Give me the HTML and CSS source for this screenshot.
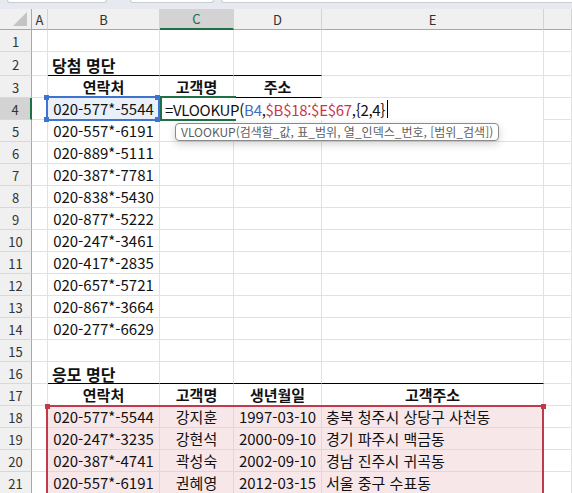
FILE: index.html
```html
<!DOCTYPE html>
<html lang="ko">
<head>
    <meta charset="UTF-8">
    <title>당첨 명단 - VLOOKUP</title>
    <link rel="stylesheet" href="styles.css">
</head>
<body>
    <div class="topbar">
        <div class="tb-box name-box"></div>
        <div class="tb-box fx-box"></div>
        <div class="tb-box bar-box"></div>
    </div>

    <div class="sheet">
        <div class="row colhead">
            <div class="corner">
                <svg width="14" height="14" viewBox="0 0 14 14"><polygon points="14,0 14,14 0,14" fill="#c4c4c4"/></svg>
            </div>
            <div class="ch">A</div>
            <div class="ch">B</div>
            <div class="ch active">C</div>
            <div class="ch">D</div>
            <div class="ch">E</div>
            <div class="ch"></div>
        </div>

        <div class="row">
            <div class="rh">1</div>
            <div class="c"></div><div class="c"></div><div class="c"></div><div class="c"></div><div class="c"></div><div class="c"></div>
        </div>

        <div class="row tall">
            <div class="rh">2</div>
            <div class="c"></div>
            <div class="c title line-b">당첨 명단</div>
            <div class="c line-b"></div>
            <div class="c line-b"></div>
            <div class="c"></div><div class="c"></div>
        </div>

        <div class="row">
            <div class="rh">3</div>
            <div class="c"></div>
            <div class="c th line-b">연락처</div>
            <div class="c th line-b">고객명</div>
            <div class="c th line-b">주소</div>
            <div class="c"></div><div class="c"></div>
        </div>

        <div class="row">
            <div class="rh active">4</div>
            <div class="c"></div>
            <div class="c ctr ref-cell">020-577*-5544</div>
            <div class="c edit span3">
                <span>=VLOOKUP(</span><span class="ref-blue">B4</span><span>,</span><span class="ref-red">$B$18:$E$67</span><span>,{2,4}</span><span class="caret"></span>
                <div class="tooltip">VLOOKUP(검색할_값, 표_범위, 열_인덱스_번호, [범위_검색])</div>
            </div>
            <div class="c"></div>
        </div>

        <div class="row"><div class="rh">5</div><div class="c"></div><div class="c ctr">020-557*-6191</div><div class="c"></div><div class="c"></div><div class="c"></div><div class="c"></div></div>
        <div class="row"><div class="rh">6</div><div class="c"></div><div class="c ctr">020-889*-5111</div><div class="c"></div><div class="c"></div><div class="c"></div><div class="c"></div></div>
        <div class="row"><div class="rh">7</div><div class="c"></div><div class="c ctr">020-387*-7781</div><div class="c"></div><div class="c"></div><div class="c"></div><div class="c"></div></div>
        <div class="row"><div class="rh">8</div><div class="c"></div><div class="c ctr">020-838*-5430</div><div class="c"></div><div class="c"></div><div class="c"></div><div class="c"></div></div>
        <div class="row"><div class="rh">9</div><div class="c"></div><div class="c ctr">020-877*-5222</div><div class="c"></div><div class="c"></div><div class="c"></div><div class="c"></div></div>
        <div class="row"><div class="rh">10</div><div class="c"></div><div class="c ctr">020-247*-3461</div><div class="c"></div><div class="c"></div><div class="c"></div><div class="c"></div></div>
        <div class="row"><div class="rh">11</div><div class="c"></div><div class="c ctr">020-417*-2835</div><div class="c"></div><div class="c"></div><div class="c"></div><div class="c"></div></div>
        <div class="row"><div class="rh">12</div><div class="c"></div><div class="c ctr">020-657*-5721</div><div class="c"></div><div class="c"></div><div class="c"></div><div class="c"></div></div>
        <div class="row"><div class="rh">13</div><div class="c"></div><div class="c ctr">020-867*-3664</div><div class="c"></div><div class="c"></div><div class="c"></div><div class="c"></div></div>
        <div class="row"><div class="rh">14</div><div class="c"></div><div class="c ctr">020-277*-6629</div><div class="c"></div><div class="c"></div><div class="c"></div><div class="c"></div></div>

        <div class="row">
            <div class="rh">15</div>
            <div class="c"></div><div class="c"></div><div class="c"></div><div class="c"></div><div class="c"></div><div class="c"></div>
        </div>

        <div class="row">
            <div class="rh">16</div>
            <div class="c"></div>
            <div class="c title line-b">응모 명단</div>
            <div class="c line-b"></div>
            <div class="c line-b"></div>
            <div class="c line-b"></div>
            <div class="c"></div>
        </div>

        <div class="row">
            <div class="rh">17</div>
            <div class="c"></div>
            <div class="c th">연락처</div>
            <div class="c th">고객명</div>
            <div class="c th">생년월일</div>
            <div class="c th">고객주소</div>
            <div class="c"></div>
        </div>

        <div class="row">
            <div class="rh">18</div>
            <div class="c"></div>
            <div class="c ctr hl range-start">020-577*-5544<div class="range"></div></div>
            <div class="c ctr hl">강지훈</div>
            <div class="c ctr hl">1997-03-10</div>
            <div class="c hl addr">충북 청주시 상당구 사천동</div>
            <div class="c"></div>
        </div>
        <div class="row">
            <div class="rh">19</div>
            <div class="c"></div>
            <div class="c ctr hl">020-247*-3235</div>
            <div class="c ctr hl">강현석</div>
            <div class="c ctr hl">2000-09-10</div>
            <div class="c hl addr">경기 파주시 맥금동</div>
            <div class="c"></div>
        </div>
        <div class="row">
            <div class="rh">20</div>
            <div class="c"></div>
            <div class="c ctr hl">020-387*-4741</div>
            <div class="c ctr hl">곽성숙</div>
            <div class="c ctr hl">2002-09-10</div>
            <div class="c hl addr">경남 진주시 귀곡동</div>
            <div class="c"></div>
        </div>
        <div class="row">
            <div class="rh">21</div>
            <div class="c"></div>
            <div class="c ctr hl">020-557*-6191</div>
            <div class="c ctr hl">권혜영</div>
            <div class="c ctr hl">2012-03-15</div>
            <div class="c hl addr">서울 중구 수표동</div>
            <div class="c"></div>
        </div>
    </div>
</body>
</html>
```

FILE: styles.css
```css
body {
    margin: 0;
    height: 493px;
    overflow: hidden;
    background-color: #fff;
    font-family: "Noto Sans CJK KR", "Noto Sans", sans-serif;
    font-size: 15px;
    color: #111;
}

/* toolbar remnants at the top */
.topbar {
    height: 9px;
    background-color: #e6e9ef;
    display: flex;
    gap: 7px;
    padding-left: 7px;
    box-sizing: border-box;
}

.tb-box {
    height: 2px;
    background: #fff;
    border: 1px solid #c9ccd2;
    border-top: none;
    border-radius: 0 0 4px 4px;
}

.name-box { width: 98px; margin-right: 16px; }
.fx-box { width: 82px; }
.bar-box { flex: 1; border-right: none; border-radius: 0 0 0 4px; }

/* grid */
.row {
    display: grid;
    grid-template-columns: 32px 16px 112px 74px 88px 222px 1fr;
    height: 22px;
}

.row.tall {
    height: 24px;
}

.c {
    box-sizing: border-box;
    border-right: 1px solid #e1e1e1;
    border-bottom: 1px solid #e1e1e1;
    white-space: nowrap;
    overflow: visible;
    display: flex;
    align-items: center;
    padding: 0 3px;
    line-height: 1;
}

.ctr {
    justify-content: center;
}

.title {
    font-size: 16px;
    font-weight: bold;
    padding-left: 4px;
    padding-top: 2px;
}

.th {
    font-weight: bold;
    justify-content: center;
}

.line-b {
    border-bottom: 1px solid #000;
}

.addr {
    padding-left: 4px;
}

/* headers */
.colhead {
    height: 21px;
}

.colhead > div {
    box-sizing: border-box;
    background-color: #f0f0f0;
    border-bottom: 1px solid #a8a8a8;
    border-right: 1px solid #d4d4d4;
    display: flex;
    align-items: center;
    justify-content: center;
    font-size: 13px;
    color: #333;
}

.corner {
    align-items: flex-end !important;
    justify-content: flex-end !important;
    padding: 0 4px 3px 0;
    border-right: 1px solid #a8a8a8 !important;
}

.ch.active {
    background-color: #d3d3d3;
    color: #1d6b40;
    border-bottom: 2px solid #1e7145;
}

.rh {
    box-sizing: border-box;
    background-color: #f0f0f0;
    border-right: 1px solid #a8a8a8;
    border-bottom: 1px solid #d8d8d8;
    display: flex;
    align-items: center;
    justify-content: center;
    font-size: 13px;
    color: #333;
    padding-top: 1px;
}

.rh.active {
    background-color: #d3d3d3;
    border-right: 2px solid #1e7145;
}

/* B4 reference box */
.ref-cell {
    position: relative;
    background-color: #eaf0fa;
}

.ref-cell::after {
    content: "";
    position: absolute;
    left: -2px;
    top: -2px;
    right: -1px;
    bottom: -2px;
    border: 2px solid #3f73d0;
}

.ref-cell::before {
    content: "";
    position: absolute;
    left: -4px;
    top: -3px;
    width: 5px;
    height: 5px;
    background: #3f73d0;
    box-shadow: 111px 0 #3f73d0, 0 22px #3f73d0, 111px 22px #3f73d0;
    z-index: 1;
}

/* the cell being edited */
.span3 {
    grid-column: span 3;
}

.edit {
    position: relative;
    background-color: #fff;
    border-right: 1px solid #e1e1e1;
    padding-left: 5px;
    border-bottom: none;
    letter-spacing: -0.3px;
}

.edit::before {
    content: "";
    position: absolute;
    left: 0;
    top: -2px;
    width: 74px;
    height: 21px;
    border: 2px solid #1e7145;
    border-right: none;
}

.ref-blue {
    color: #3b6fcb;
}

.ref-red {
    color: #c8364c;
}

.caret {
    display: inline-block;
    width: 1px;
    height: 18px;
    background: #000;
    margin-left: 2px;
}

.tooltip {
    position: absolute;
    left: 15px;
    top: 25px;
    padding: 1px 5px 0;
    height: 15px;
    line-height: 14px;
    font-size: 12px;
    letter-spacing: 0;
    color: #5e5e5e;
    background: #fff;
    border: 1px solid #8a8a8a;
    border-radius: 4px;
    box-shadow: 0 3px 8px rgba(0, 0, 0, 0.18);
    z-index: 2;
}

/* B18:E67 range highlight */
.hl {
    background-color: #f7e7e9;
    border-color: #e6d4d7;
}

.range-start {
    position: relative;
}

.range {
    position: absolute;
    left: -2px;
    top: -1px;
    width: 498px;
    height: 120px;
    box-sizing: border-box;
    border: 2px solid #c13a4c;
    border-bottom: none;
}

.range::before,
.range::after {
    content: "";
    position: absolute;
    top: -3px;
    width: 5px;
    height: 5px;
    background: #c13a4c;
}

.range::before {
    left: -3px;
}

.range::after {
    right: -4px;
}
```
